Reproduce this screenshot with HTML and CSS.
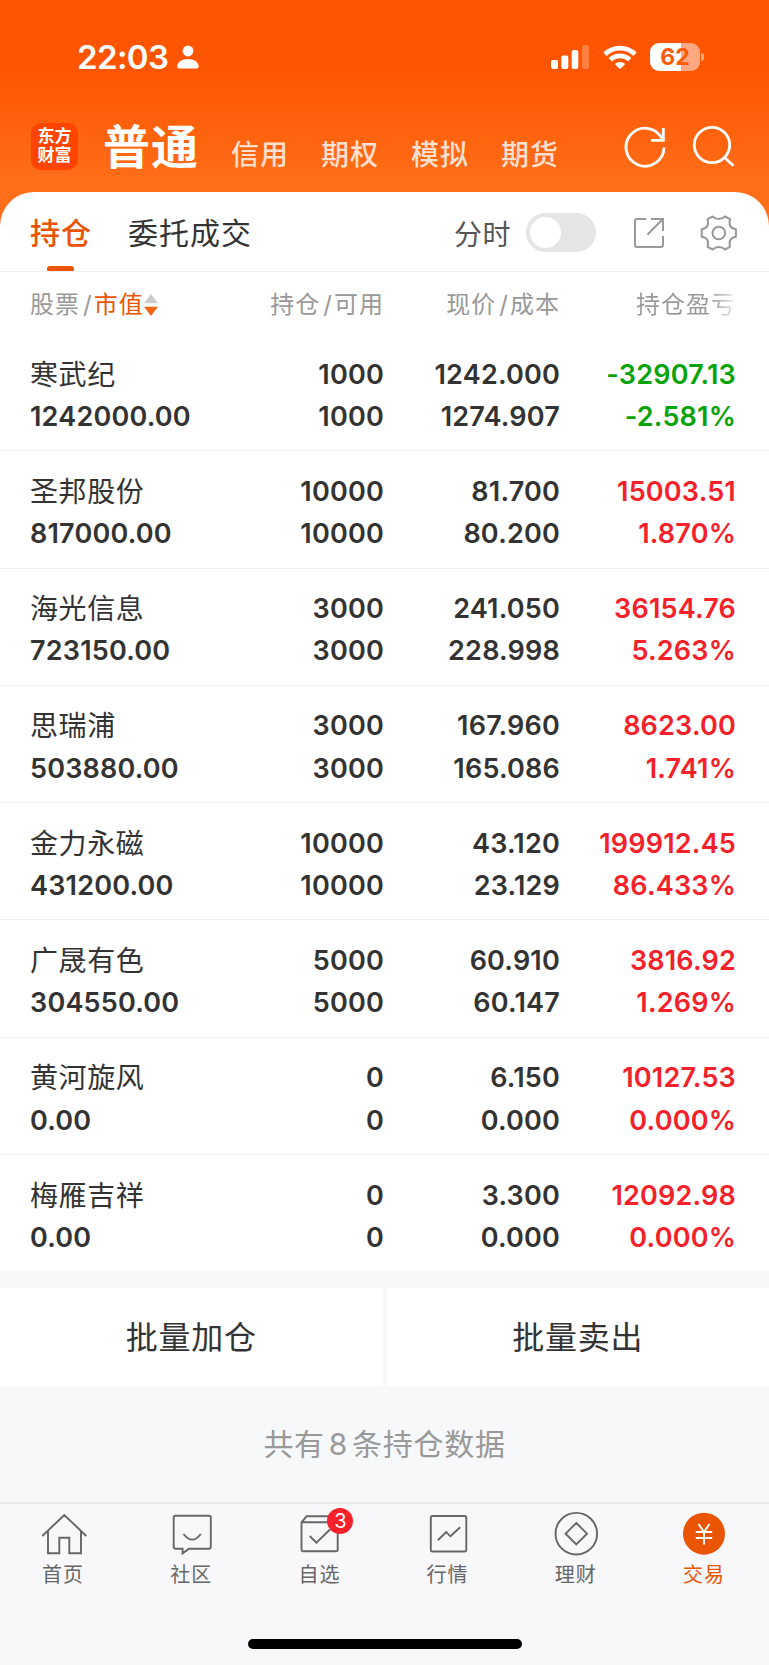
FILE: index.html
```html
<!DOCTYPE html>
<html lang="zh-CN">
<head>
  <meta charset="UTF-8" />
  <meta name="viewport" content="width=device-width, initial-scale=1.0"/>
  <title>持仓</title>
  <link rel="stylesheet" href="styles.css">
</head>
<body>
  <div class="app">
    <header class="header">
      <div class="status-bar">
        <span class="time">22:03</span>
        <svg class="person" width="22" height="24" viewBox="0 0 22 24" fill="#fff"><circle cx="11" cy="6" r="5.4"/><path d="M0.3 21.5C0.3 17 5 14 11 14s10.700 3 10.700 7.500c0 1.300-.8 2-2 2H2.300c-1.200 0-2-.7-2-2z"/></svg>
        <div class="status-icons">
          <svg width="38" height="24" viewBox="0 0 38 24" fill="#fff"><rect x="0" y="15" width="7" height="9" rx="2"/><rect x="10.300" y="10.500" width="7" height="13.500" rx="2"/><rect x="20.700" y="5" width="6.600" height="19" rx="2"/><rect x="31" y="0" width="7" height="24" rx="2" opacity=".25"/></svg>
          <svg class="wifi" width="34" height="24" viewBox="0 0 34 24"><g fill="none" stroke="#fff" stroke-width="4.800"><path d="M2 9.200a21.500 21.500 0 0 1 30 0"/><path d="M7.300 14.800a14 14 0 0 1 19.400 0"/></g><path d="M11.800 19a7.500 7.500 0 0 1 10.400 0L17 24.300z" fill="#fff"/></svg>
          <div class="battery"><span>62</span></div>
        </div>
      </div>
      <nav class="accounts">
        <div class="logo">东方<br>财富</div>
        <span class="account active">普通</span>
        <span class="account">信用</span>
        <span class="account">期权</span>
        <span class="account">模拟</span>
        <span class="account">期货</span>
        <svg class="refresh" width="44" height="44" viewBox="0 0 44 44" fill="none" stroke="#fff" stroke-width="2.800"><path d="M41 23.500A19 19 0 1 1 39.500 15.800"/><path d="M40.300 4v12.300H28"/></svg>
        <svg class="search" width="44" height="44" viewBox="0 0 44 44" fill="none" stroke="#fff" stroke-width="2.800"><circle cx="20" cy="21" r="17.700"/><path d="M32.500 33.500l9 8.300"/></svg>
      </nav>
    </header>

    <main class="panel">
      <div class="tabs">
        <span class="tab active">持仓</span>
        <span class="tab">委托成交</span>
        <span class="switch-label">分时</span>
        <span class="switch"></span>
        <svg class="share" width="32" height="32" viewBox="0 0 32 32" fill="none" stroke="#999" stroke-width="2"><path d="M13 2H4a2 2 0 0 0-2 2v24a2 2 0 0 0 2 2h24a2 2 0 0 0 2-2V19"/><path d="M18 2h12v12M30 2L14.500 17.500"/></svg>
        <svg class="gear" width="38" height="36" viewBox="0 0 38 36" fill="none" stroke="#999" stroke-width="2" stroke-linejoin="round"><path d="M12.700 1.500Q15.300 4 18.800 4T24.900 1.500L30 4.200C28.600 10.300 30.300 13.200 35.900 14.300V21.700C30.300 22.800 28.600 25.700 30 31.800L24.900 34.500Q22.300 32 18.800 32T12.700 34.500L7.600 31.800C9 25.700 7.300 22.800 1.700 21.700V14.300C7.300 13.200 9 10.300 7.600 4.200Z"/><circle cx="18.800" cy="18" r="6.300"/></svg>
      </div>

      <div class="table">
        <div class="table-head">
          <span>股票<i>/</i><b>市值</b><svg class="sort" width="14" height="22" viewBox="0 0 14 22"><path d="M7 0l7 9.300H0z" fill="#ccc"/><path d="M7 22l7-9.300H0z" fill="#f56514"/></svg></span>
          <span>持仓<i>/</i>可用</span>
          <span>现价<i>/</i>成本</span>
          <span class="fade">持仓盈亏</span>
        </div>
        <div class="row">
          <div><p class="name">寒武纪</p><p>1242000.00</p></div>
          <div><p>1000</p><p>1000</p></div>
          <div><p>1242.000</p><p>1274.907</p></div>
          <div class="down"><p>-32907.13</p><p>-2.581%</p></div>
        </div>
        <div class="row">
          <div><p class="name">圣邦股份</p><p>817000.00</p></div>
          <div><p>10000</p><p>10000</p></div>
          <div><p>81.700</p><p>80.200</p></div>
          <div class="up"><p>15003.51</p><p>1.870%</p></div>
        </div>
        <div class="row">
          <div><p class="name">海光信息</p><p>723150.00</p></div>
          <div><p>3000</p><p>3000</p></div>
          <div><p>241.050</p><p>228.998</p></div>
          <div class="up"><p>36154.76</p><p>5.263%</p></div>
        </div>
        <div class="row">
          <div><p class="name">思瑞浦</p><p>503880.00</p></div>
          <div><p>3000</p><p>3000</p></div>
          <div><p>167.960</p><p>165.086</p></div>
          <div class="up"><p>8623.00</p><p>1.741%</p></div>
        </div>
        <div class="row">
          <div><p class="name">金力永磁</p><p>431200.00</p></div>
          <div><p>10000</p><p>10000</p></div>
          <div><p>43.120</p><p>23.129</p></div>
          <div class="up"><p>199912.45</p><p>86.433%</p></div>
        </div>
        <div class="row">
          <div><p class="name">广晟有色</p><p>304550.00</p></div>
          <div><p>5000</p><p>5000</p></div>
          <div><p>60.910</p><p>60.147</p></div>
          <div class="up"><p>3816.92</p><p>1.269%</p></div>
        </div>
        <div class="row">
          <div><p class="name">黄河旋风</p><p>0.00</p></div>
          <div><p>0</p><p>0</p></div>
          <div><p>6.150</p><p>0.000</p></div>
          <div class="up"><p>10127.53</p><p>0.000%</p></div>
        </div>
        <div class="row">
          <div><p class="name">梅雁吉祥</p><p>0.00</p></div>
          <div><p>0</p><p>0</p></div>
          <div><p>3.300</p><p>0.000</p></div>
          <div class="up"><p>12092.98</p><p>0.000%</p></div>
        </div>
      </div>
    </main>

    <div class="actions">
      <div class="action">批量加仓</div>
      <div class="action">批量卖出</div>
    </div>
    <p class="summary">共有<span>8</span>条持仓数据</p>

    <footer class="tabbar">
      <div class="tabbar-items">
        <div class="item">
          <svg width="48" height="48" viewBox="0 0 48 48"><path d="M2.300 26L24.300 5l22 21M8 21v22.300h11.300V27.700h10v15.600H41V21"/></svg>
          <span>首页</span>
        </div>
        <div class="item">
          <svg width="48" height="48" viewBox="0 0 48 48"><path d="M7.500 5.800H41a1.800 1.800 0 0 1 1.800 1.800V37a1.800 1.800 0 0 1-1.800 1.800H21l-6.400 4.500v-4.500H7.500A1.800 1.800 0 0 1 5.700 37V7.600a1.800 1.800 0 0 1 1.800-1.800z"/><path d="M15.500 24q8.700 11.300 17.300 0"/></svg>
          <span>社区</span>
        </div>
        <div class="item">
          <svg width="48" height="48" viewBox="0 0 48 48"><path d="M5.500 12.300L10.500 6.300H36.700L41.700 12.300V39.500a1.800 1.800 0 0 1-1.800 1.800H7.300a1.800 1.800 0 0 1-1.800-1.800zH41.700"/><path d="M13.700 26l6.700 6.700L34 19.500"/></svg>
          <em class="badge">3</em>
          <span>自选</span>
        </div>
        <div class="item">
          <svg width="48" height="48" viewBox="0 0 48 48"><rect x="5.800" y="6" width="35.500" height="35.500" rx="1.800"/><path d="M12.800 30.300L21.200 22l4.300 4.300 9.700-9"/></svg>
          <span>行情</span>
        </div>
        <div class="item">
          <svg width="48" height="48" viewBox="0 0 48 48"><circle cx="23.300" cy="23.700" r="20.800"/><path d="M23.300 13l10.700 10.700-10.700 10.700-10.700-10.700z"/></svg>
          <span>理财</span>
        </div>
        <div class="item active">
          <svg width="48" height="48" viewBox="0 0 48 48"><circle cx="23" cy="23.700" r="21"/><path d="M17.500 14l5.500 8 5.500-8M14.800 22h16.400M14.800 28h16.400M23 22v12.500"/></svg>
          <span>交易</span>
        </div>
      </div>
      <div class="home-indicator"></div>
    </footer>
  </div>
</body>
</html>
```
FILE: styles.css
```css
:root {
  --primary-color: #ea5504;
  --text-color: #333333;
  --muted-color: #999999;
  --up-color: #f4212a;
  --down-color: #07a307;
  --bg-color: #f7f8fa;
  --line-color: #eeeff0;
}
* {
  box-sizing: border-box;
}
body {
  margin: 0;
  font-family: Inter, "Noto Sans CJK SC", sans-serif;
  color: var(--text-color);
  background-color: var(--bg-color);
}
p {
  margin: 0;
}
svg {
  display: block;
  flex: none;
}
.app {
  width: 769px;
  height: 1665px;
  display: flex;
  flex-direction: column;
  overflow: hidden;
}

/* header */
.header {
  height: 232px;
  flex: none;
  background: linear-gradient(#ff5500 0, #ff5500 70px, #ff6e19 185px);
  color: #fff;
}
.status-bar {
  display: flex;
  align-items: center;
  height: 114px;
  padding: 0 65px 0 77px;
}
.time {
  font-size: 33px;
  font-weight: 600;
  letter-spacing: -0.600px;
}
.person {
  margin-left: 9px;
}
.status-icons {
  display: flex;
  align-items: center;
  margin-left: auto;
}
.wifi {
  margin: 0 13px 0 14px;
}
.battery {
  position: relative;
  width: 50px;
  height: 28px;
  margin-right: 4px;
  border-radius: 9px;
  background: linear-gradient(90deg, #fff 31px, #ffa880 31px);
  color: #ff5a08;
  font-size: 23px;
  font-weight: 700;
  line-height: 28px;
  text-align: center;
}
.battery::after {
  content: "";
  position: absolute;
  right: -4px;
  top: 10px;
  width: 3px;
  height: 8px;
  border-radius: 0 3px 3px 0;
  background-color: #ffa880;
}
.accounts {
  display: flex;
  align-items: center;
  height: 64px;
  padding: 0 33px 0 31px;
}
.logo {
  width: 47px;
  height: 47px;
  padding-top: 4px;
  border-radius: 10px;
  background-color: #ff4400;
  font-size: 17px;
  font-weight: 700;
  line-height: 19.500px;
  text-align: center;
}
.account {
  margin: 18px 0 0 32px;
  width: 58px;
  font-size: 28px;
  font-weight: 500;
  letter-spacing: 1px;
  line-height: 40px;
  white-space: nowrap;
  color: #ffdfcd;
}
.account.active {
  width: 96px;
  margin: 1px 0 0 25px;
  font-size: 47px;
  font-weight: 700;
  line-height: 60px;
  color: #fff;
}
.refresh {
  margin-left: auto;
}
.search {
  margin-left: 25px;
}

/* holdings */
.panel {
  flex: none;
  margin-top: -40px;
  height: 1079px;
  border-radius: 34px 34px 0 0;
  background-color: #fff;
}
.tabs {
  display: flex;
  align-items: center;
  height: 80px;
  padding: 0 31px 0 30px;
  border-bottom: 1px solid var(--line-color);
}
.tab {
  position: relative;
  height: 79px;
  margin-right: 36px;
  font-size: 30px;
  letter-spacing: 1px;
  line-height: 82px;
}
.tab.active {
  font-weight: 500;
  color: var(--primary-color);
}
.tab.active::after {
  content: "";
  position: absolute;
  left: 17px;
  bottom: 0;
  width: 27px;
  height: 5px;
  border-radius: 3px 3px 1px 1px;
  background-color: var(--primary-color);
}
.switch-label {
  margin: 2px 0 0 auto;
  font-size: 28px;
  letter-spacing: 0.500px;
  color: #555;
}
.switch {
  width: 70px;
  height: 39px;
  margin: 2px 37px 0 15px;
  padding: 4px;
  border-radius: 20px;
  background-color: #e4e5e7;
}
.switch::before {
  content: "";
  display: block;
  width: 31px;
  height: 31px;
  border-radius: 50%;
  background-color: #fff;
}
.share {
  margin: 2px 35px 0 0;
}
.gear {
  margin-top: 2px;
}
.table-head,
.row {
  display: grid;
  grid-template-columns: 180px 174px 176px 176px;
  padding-left: 30px;
  text-align: right;
}
.table-head {
  height: 62px;
  font-size: 24px;
  letter-spacing: 1px;
  line-height: 65px;
  color: var(--muted-color);
}
.table-head i {
  margin: 0 1px 0 3px;
  font-style: normal;
}
.table-head b {
  font-weight: 400;
  color: var(--primary-color);
}
.table-head span:first-child,
.row div:first-child {
  text-align: left;
}
.sort {
  display: inline-block;
  vertical-align: -3px;
}
.fade {
  background: linear-gradient(90deg, #999 150px, #eee 176px);
  -webkit-background-clip: text;
  background-clip: text;
  color: transparent;
}
.row {
  height: 117.300px;
  padding-top: 19.500px;
  border-bottom: 1px solid var(--line-color);
  font-size: 27px;
  font-weight: 600;
  letter-spacing: 0.200px;
  line-height: 42.400px;
}
.row:last-child {
  border-bottom: none;
}
.row p {
  height: 42.400px;
}
.row .name {
  font-size: 28px;
  font-weight: 400;
  letter-spacing: 0.600px;
}
.up {
  color: var(--up-color);
}
.down {
  color: var(--down-color);
}

/* batch buttons */
.actions {
  display: flex;
  gap: 4px;
  flex: none;
  height: 98px;
  margin-top: 17px;
}
.action {
  flex: 1;
  background-color: #fff;
  font-size: 32px;
  letter-spacing: 0.800px;
  line-height: 100px;
  text-align: center;
}
.summary {
  flex: none;
  height: 116px;
  font-size: 30px;
  letter-spacing: 0.700px;
  line-height: 116px;
  text-align: center;
  color: var(--muted-color);
}
.summary span {
  margin: 0 4px;
}

/* bottom navigation */
.tabbar {
  flex: 1;
  border-top: 2px solid #e9eaec;
  background-color: #f8f8fb;
}
.tabbar-items {
  display: grid;
  grid-template-columns: repeat(6, 1fr);
  height: 135px;
  padding-top: 6px;
}
.item {
  position: relative;
  display: flex;
  flex-direction: column;
  align-items: center;
  font-size: 20px;
  letter-spacing: 1px;
  line-height: 35px;
  color: #666;
}
.item span {
  margin-right: 2px;
}
.item svg {
  fill: none;
  stroke: #666;
  stroke-width: 1.900;
}
.item.active {
  color: var(--primary-color);
}
.item.active circle {
  fill: var(--primary-color);
  stroke: none;
}
.item.active path {
  stroke: #fff;
  stroke-width: 1.900;
}
.badge {
  position: absolute;
  left: 71px;
  top: -2px;
  width: 26px;
  height: 26px;
  border-radius: 50%;
  background-color: #f4212a;
  color: #fff;
  font-size: 20px;
  font-style: normal;
  letter-spacing: 0;
  line-height: 26px;
  text-align: center;
}
.home-indicator {
  width: 274px;
  height: 10px;
  margin: 0 auto;
  border-radius: 5px;
  background-color: #000;
}
```
